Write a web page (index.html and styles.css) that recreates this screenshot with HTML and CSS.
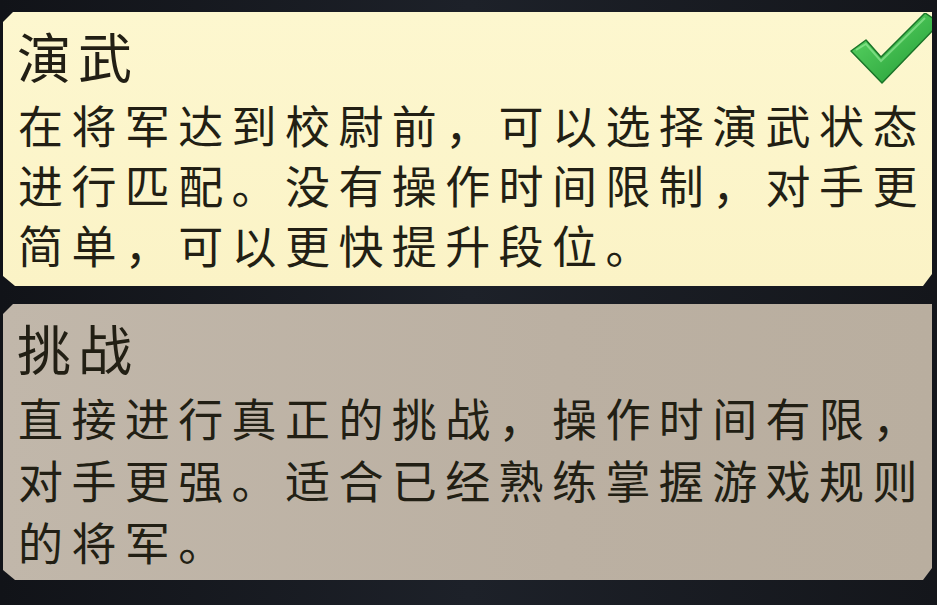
FILE: index.html
```html
<!DOCTYPE html>
<html lang="zh-CN">
<head>
    <meta charset="UTF-8">
    <meta name="viewport" content="width=device-width, initial-scale=1.0">
    <title>模式选择</title>
    <link rel="stylesheet" href="styles.css">
</head>
<body>
    <div class="mode-list">
        <div class="mode-card selected">
            <div class="mode-title">演武</div>
            <div class="mode-desc">在将军达到校尉前，可以选择演武状态<br>进行匹配。没有操作时间限制，对手更<br>简单，可以更快提升段位。</div>
            <svg class="check" viewBox="0 0 90 80" width="90" height="80">
                <defs>
                    <linearGradient id="checkFill" x1="0" y1="0" x2="1" y2="1">
                        <stop offset="0" stop-color="#62dc6a"/>
                        <stop offset="1" stop-color="#1e9731"/>
                    </linearGradient>
                </defs>
                <!-- tick: short leg then long leg up to the corner -->
                <path d="M3 38 L18 27 L33 44 L77 0 L92 10 L34 70 Z" fill="url(#checkFill)" stroke="#1a7428" stroke-width="1.5" stroke-linejoin="round"/>
                <path d="M8 37 L18 31 L33 48 L77 5" fill="none" stroke="#a4f2a6" stroke-width="2" opacity="0.55"/>
            </svg>
        </div>
        <div class="mode-card challenge">
            <div class="mode-title">挑战</div>
            <div class="mode-desc">直接进行真正的挑战，操作时间有限，<br>对手更强。适合已经熟练掌握游戏规则<br>的将军。</div>
        </div>
    </div>
</body>
</html>
```

FILE: styles.css
```css
body {
    margin: 0;
    padding: 0;
    background-color: #15171c;
    font-family: "Noto Sans CJK SC", "Noto Sans CJK TC", sans-serif;
    color: #221f14;
    overflow: hidden;
}

.mode-list {
    display: flex;
    flex-direction: column;
    gap: 18px;
    padding: 12px 5px 0 3px;
    height: 605px;
    box-sizing: border-box;
    background: linear-gradient(to right, #111318, #1d2129 50%, #14161b);
}

.mode-card {
    position: relative;
    padding: 13px 15px 11px;
    clip-path: polygon(10px 0, 100% 0, 100% calc(100% - 12px), calc(100% - 9px) 100%, 12px 100%, 0 calc(100% - 10px), 0 10px);
}

.mode-card.selected {
    background: linear-gradient(to bottom, #fdf7cf, #fbf3c6);
}

.mode-card.challenge {
    padding: 13px 15px 7px;
    background: linear-gradient(to right, #c1b7aa, #bbb0a2 60%, #b9ae9f);
}

.mode-title {
    font-size: 54px;
    line-height: 62px;
    letter-spacing: 7px;
    margin-bottom: 8px;
    margin-left: -1px;
}

.mode-desc {
    font-size: 45px;
    line-height: 60px;
    letter-spacing: 8.4px;
    white-space: nowrap;
}

.challenge .mode-desc {
    line-height: 62px;
}

.check {
    position: absolute;
    top: 1px;
    right: -6px;
}
```
